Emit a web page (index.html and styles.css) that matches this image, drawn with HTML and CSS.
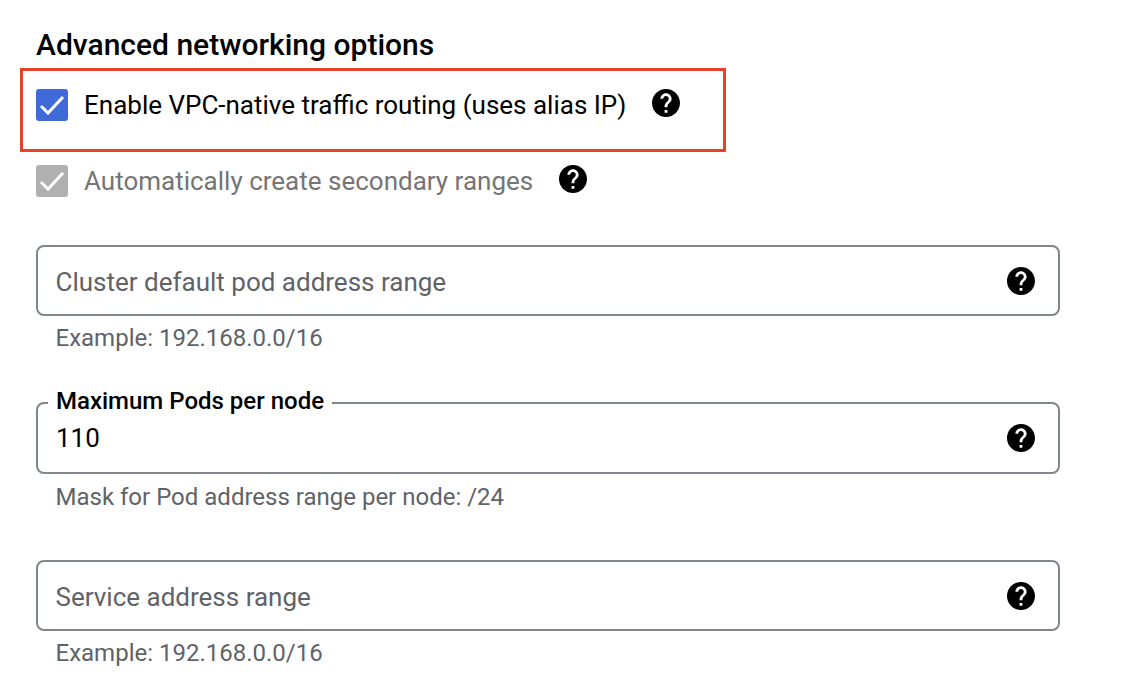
FILE: index.html
```html
<!DOCTYPE html>
<html lang="en">
<head>
  <meta charset="UTF-8" />
  <title>Advanced networking options</title>
  <link rel="stylesheet" href="styles.css">
</head>

<body>
  <svg class="icon-defs" xmlns="http://www.w3.org/2000/svg">
    <symbol id="icon-help" viewBox="2 2 20 20">
      <path d="M12 2C6.48 2 2 6.48 2 12s4.48 10 10 10 10-4.48 10-10S17.52 2 12 2zm1 17h-2v-2h2v2zm2.07-7.75l-.9.92C13.45 12.9 13 13.5 13 15h-2v-.5c0-1.1.45-2.1 1.17-2.83l1.24-1.26c.37-.36.59-.86.59-1.41 0-1.1-.9-2-2-2s-2 .9-2 2H8c0-2.21 1.79-4 4-4s4 1.79 4 4c0 .88-.36 1.68-.93 2.25z"/>
    </symbol>
    <symbol id="icon-check" viewBox="0 0 32 32">
      <path d="M5 17l7 7L27 8"/>
    </symbol>
  </svg>

  <main class="panel">
    <h2>Advanced networking options</h2>

    <div class="highlight">
      <div class="check-row">
        <span class="checkbox"><svg><use href="#icon-check"/></svg></span>
        <span class="check-label">Enable VPC-native traffic routing (uses alias IP)</span>
        <svg class="help"><use href="#icon-help"/></svg>
      </div>
    </div>

    <div class="check-row disabled">
      <span class="checkbox"><svg><use href="#icon-check"/></svg></span>
      <span class="check-label">Automatically create secondary ranges</span>
      <svg class="help"><use href="#icon-help"/></svg>
    </div>

    <div class="field-group first">
      <div class="field">
        <span class="placeholder">Cluster default pod address range</span>
        <svg class="help"><use href="#icon-help"/></svg>
      </div>
      <p class="hint">Example: 192.168.0.0/16</p>
    </div>

    <div class="field-group filled">
      <div class="field">
        <label class="float-label">Maximum Pods per node</label>
        <span class="value">110</span>
        <svg class="help"><use href="#icon-help"/></svg>
      </div>
      <p class="hint">Mask for Pod address range per node: /24</p>
    </div>

    <div class="field-group">
      <div class="field">
        <span class="placeholder">Service address range</span>
        <svg class="help"><use href="#icon-help"/></svg>
      </div>
      <p class="hint">Example: 192.168.0.0/16</p>
    </div>
  </main>
</body>
</html>
```

FILE: styles.css
```css
* {
  box-sizing: border-box;
}

body {
  font-family: Roboto, Arial, sans-serif;
  margin: 0;
  background-color: #fff;
  color: #000;
}

.icon-defs {
  display: none;
}

.panel {
  width: 1134px;
  height: 692px;
  overflow: hidden;
  padding: 27px 74px 0 36px;
}

h2 {
  font-size: 30px;
  font-weight: 500;
  line-height: 36px;
  margin: 0 0 5px;
}

.highlight {
  width: 706px;
  height: 84px;
  margin-left: -16px;
  padding: 18px 0 0 13px;
  border: 3px solid #e8412a;
}

.check-row {
  display: flex;
  align-items: center;
  height: 32px;
}

.check-row.disabled {
  margin-top: 13px;
  color: #757575;
}

.checkbox {
  width: 32px;
  height: 32px;
  flex: none;
  border-radius: 3px;
  background-color: #3f6ad8;
}

.disabled .checkbox {
  background-color: #b0b0b0;
}

.checkbox svg {
  display: block;
  width: 32px;
  height: 32px;
  fill: none;
  stroke: #fff;
  stroke-width: 3;
}

.check-label {
  margin-left: 16px;
  font-size: 26px;
  line-height: 32px;
}

.check-row .help {
  margin-left: 26px;
  margin-top: -4px;
}

.help {
  width: 28px;
  height: 28px;
  flex: none;
  fill: #000;
}

.field-group.first {
  margin-top: 48px;
}

.field {
  position: relative;
  display: flex;
  align-items: center;
  justify-content: space-between;
  height: 71px;
  padding: 0 23px 0 18px;
  border: 2px solid #80868b;
  border-radius: 8px;
  font-size: 26px;
}

.filled .field {
  height: 72px;
}

.placeholder {
  color: #5f6368;
  margin-left: -0.500px;
  padding-top: 3px;
}

.float-label {
  position: absolute;
  top: -17px;
  left: 10px;
  padding: 0 8px;
  background-color: #fff;
  font-size: 24px;
  font-weight: 500;
  line-height: 28px;
}

.hint {
  height: 86px;
  margin: 0;
  padding: 7px 0 0 19.500px;
  font-size: 24px;
  line-height: 30px;
  color: #5f6368;
}

.filled .hint {
  padding-top: 8px;
}
```
